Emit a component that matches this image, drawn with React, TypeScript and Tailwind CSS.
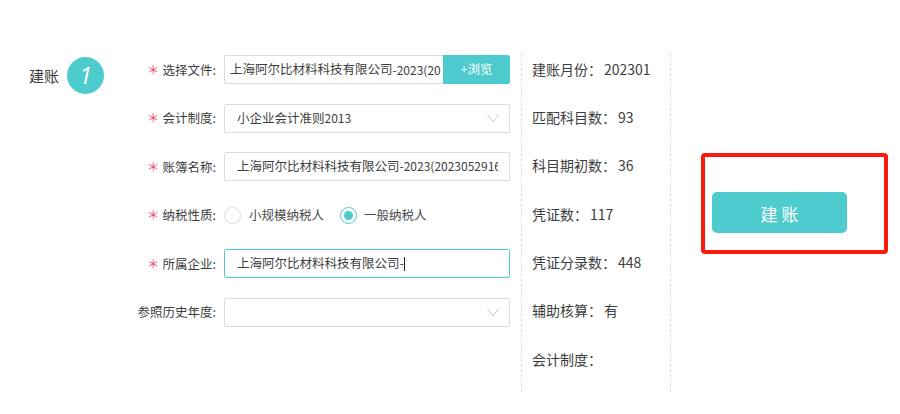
const FORM_LABEL = "w-[92px] shrink-0 text-right text-[12.5px] leading-[20px] text-[#3d3d3d] whitespace-nowrap";

const INFO = [
  { label: "建账月份", value: "202301" },
  { label: "匹配科目数", value: "93" },
  { label: "科目期初数", value: "36" },
  { label: "凭证数", value: "117" },
  { label: "凭证分录数", value: "448" },
  { label: "辅助核算", value: "有" },
  { label: "会计制度", value: "" },
];

function Chevron() {
  return (
    <svg width="12" height="9" viewBox="0 0 12 9" fill="none" className="shrink-0">
      <path d="M0.5 0.8 L6 8 L11.5 0.8" stroke="#c6c6c6" strokeWidth="1" />
    </svg>
  );
}

function Row({ label, required, children }: { label: string; required?: boolean; children: React.ReactNode }) {
  return (
    <div className="flex h-[29px] items-center">
      <div className={FORM_LABEL}>
        {required && <span className="mr-[3px] text-[#f5475b]">＊</span>}
        {label}:
      </div>
      <div className="ml-[8px] w-[286px]">{children}</div>
    </div>
  );
}

function Field({ children, focused }: { children?: React.ReactNode; focused?: boolean }) {
  return (
    <div
      className={`flex h-[29px] items-center justify-between overflow-hidden whitespace-nowrap rounded-[2px] border pl-[12px] pr-[10px] text-[12.5px] text-[#3d3d3d] ${
        focused ? "border-[#4ecbcd]" : "border-[#dcdcdc]"
      }`}
    >
      {children}
    </div>
  );
}

export default function App() {
  return (
    <div className="relative h-[414px] w-[900px] overflow-hidden bg-white font-['Noto_Sans_CJK_SC','Noto_Sans',sans-serif]">
      <div className="flex pt-[53px]">
        {/* Step */}
        <div className="ml-[29px] mt-[4px] flex h-[37px] w-[95px] shrink-0 items-center">
          <span className="w-[31px] shrink-0 text-[15px] leading-[20px] text-[#3d3d3d]">建账</span>
          <span className="ml-[7px] flex h-[37px] w-[37px] shrink-0 items-center justify-center rounded-full bg-[#4ecbcd] text-[23px] italic text-white font-['Open_Sans',sans-serif]">
            1
          </span>
        </div>

        {/* Form */}
        <div className="mt-[2px] flex w-[397px] shrink-0 flex-col gap-[19.5px]">
          <Row label="选择文件" required>
            <div className="flex h-[29px]">
              <div className="flex min-w-0 flex-1 items-center overflow-hidden rounded-l-[2px] border border-r-0 border-[#dcdcdc] pl-[5px] text-[12.5px] text-[#3d3d3d] whitespace-nowrap">
                上海阿尔比材料科技有限公司<span className="text-[12px]">-2023(20</span>
              </div>
              <button className="w-[67px] shrink-0 rounded-r-[2px] bg-[#4ecbcd] text-[12.5px] text-white">+浏览</button>
            </div>
          </Row>
          <Row label="会计制度" required>
            <Field>
              <span>
                小企业会计准则<span className="text-[12px]">2013</span>
              </span>
              <Chevron />
            </Field>
          </Row>
          <Row label="账簿名称" required>
            <Field>
              <span className="w-[261px] shrink-0 overflow-hidden">
                上海阿尔比材料科技有限公司<span className="text-[12px]">-2023(2023052916</span>
              </span>
            </Field>
          </Row>
          <Row label="纳税性质" required>
            <div className="flex items-center text-[12.5px] text-[#4a4a4a]">
              <span className="h-[17px] w-[17px] rounded-full border border-[#dcdcdc]" />
              <span className="ml-[8px]">小规模纳税人</span>
              <span className="ml-[16px] flex h-[17px] w-[17px] items-center justify-center rounded-full border border-[#4ecbcd]">
                <span className="h-[9px] w-[9px] rounded-full bg-[#4ecbcd]" />
              </span>
              <span className="ml-[7px]">一般纳税人</span>
            </div>
          </Row>
          <Row label="所属企业" required>
            <Field focused>
              <span className="flex items-center">
                上海阿尔比材料科技有限公司-
                <span className="inline-block h-[14px] w-px bg-[#222]" />
              </span>
            </Field>
          </Row>
          <Row label="参照历史年度">
            <Field>
              <span />
              <Chevron />
            </Field>
          </Row>
        </div>

        {/* Summary */}
        <div className="flex h-[339px] w-[150px] shrink-0 flex-col gap-[28.4px] border-x border-dashed border-[#dcdcdc] pl-[10px] pt-[5.5px] text-[14px] leading-[20px] text-[#3d3d3d]">
          {INFO.map((item) => (
            <div key={item.label} className="whitespace-nowrap">
              {item.label}：<span className="ml-[2px]">{item.value}</span>
            </div>
          ))}
        </div>

        {/* Action */}
        <div className="ml-[41px] mt-[139px]">
          <button className="h-[41px] w-[135px] rounded-[5px] bg-[#4ecbcd] pl-[4px] pt-[2px] text-[17px] tracking-[4px] text-white">
            建账
          </button>
        </div>
      </div>

      {/* red annotation */}
      <div className="absolute left-[701px] top-[153px] h-[101px] w-[187px] rounded-[4px] border-[4px] border-[#fb1a0e]" />
    </div>
  );
}
